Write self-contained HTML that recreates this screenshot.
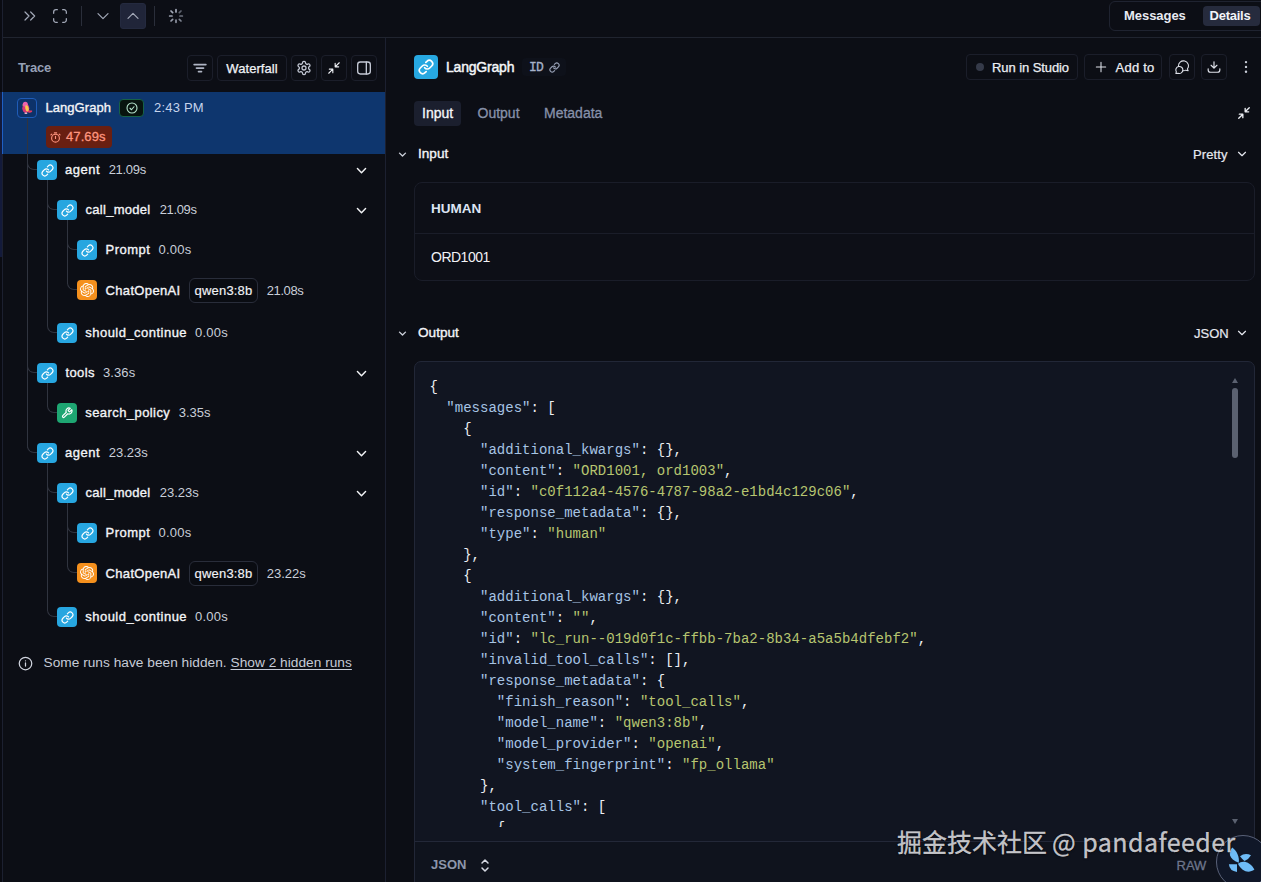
<!DOCTYPE html>
<html lang="en">
<head>
<meta charset="utf-8">
<title>LangGraph trace</title>
<style>
*{box-sizing:border-box;margin:0;padding:0}
html,body{width:1261px;height:882px;overflow:hidden;background:#0c0e15;}
body{position:relative;font-family:"Liberation Sans","Noto Sans CJK SC",sans-serif;font-size:13px;color:#eef0f5;-webkit-font-smoothing:antialiased}
.abs{position:absolute}
svg{display:block}
.ic{stroke:currentColor;fill:none;stroke-linecap:round;stroke-linejoin:round}
/* left strip */
#strip{left:0;top:0;width:2px;height:882px;background:#0a0b12}
#strip .a{left:0;top:92px;width:2px;height:165px;background:#131a3a}
#lborder{left:2px;top:0;width:1px;height:882px;background:#1c2030}
/* top bar */
#topline{left:3px;top:37px;width:1258px;height:1px;background:#20242f}
.tbtn{color:#a3a9b8}
#upbtn{left:120px;top:3px;width:26px;height:26px;border-radius:3px;background:#202539;border:1px solid #242a3f}
.vdiv{width:1px;height:20px;top:6px;background:#2a2e3a}
#seg{left:1109px;top:1px;width:160px;height:30px;border:1px solid #1f2330;border-radius:6px}
#seg .m{left:14px;top:0;height:28px;line-height:28px;font-weight:700;font-size:13px;color:#e8ebf2;letter-spacing:-0.05px}
#seg .d{left:92.5px;text-indent:-2px;top:4px;width:57px;height:20px;border-radius:4px;background:#262b3d;line-height:20px;text-align:center;font-weight:700;font-size:13px;color:#f2f4f8;letter-spacing:-0.25px}
/* left panel */
#pborder{left:385px;top:38px;width:1px;height:844px;background:#1c2030}
#trace{left:18px;top:60px;font-size:13px;font-weight:700;color:#96a0b5;line-height:16px;letter-spacing:-0.2px}
.hbtn{top:55px;width:26px;height:26px;border:1px solid #1b1e2a;border-radius:4px;color:#c3c8d4}
.hbtn svg{position:absolute;left:5px;top:5px}
#wf{left:217px;width:70px;color:#f0f2f6;font-size:13px;line-height:25.4px;text-align:center;letter-spacing:0.05px;-webkit-text-stroke:0.25px #f0f2f6}
#sel{left:2px;top:92px;width:383px;height:62px;background:#0e366e}
#sel .edge{left:0;top:0;width:1px;height:62px;background:#1f5fc4}
#bird{left:15px;top:6px;width:20px;height:20px;border:1px solid #1f5cb8;border-radius:4px;background:#0d3269}
.nm{font-size:13px;line-height:16px;color:#f3f4f7;white-space:nowrap;-webkit-text-stroke:0.35px #f3f4f7}
.du{font-size:13px;line-height:16px;color:#c9ced9;white-space:nowrap}
#okb{left:117px;top:7px;width:25px;height:18px;border:1px solid #176247;border-radius:4px;background:#08140f;color:#b6e3cd}
#okb svg{position:absolute;left:5.5px;top:2px}
#dur{left:43.5px;top:34px;width:66px;height:22px;border-radius:4px;background:#691f11;color:#ff957e;font-size:13px;line-height:22px;-webkit-text-stroke:0.3px #ff957e}
#dur svg{position:absolute;left:4px;top:5.500px}
#dur span{position:absolute;left:20.500px;top:0.300px;letter-spacing:0.100px}
.node{width:20px;height:20px;border-radius:4px;background:#27a6e0;color:#fff}
.node svg{position:absolute;left:3.5px;top:3.5px}
.node.or{background:#f5901d}
.node.gr{background:#1ea672}
.vl{width:1px;background:#30343f}
.cn{width:10px;height:10px;border-left:1px solid #30343f;border-bottom:1px solid #30343f;border-bottom-left-radius:7px}
.chev{left:354.5px;color:#f2f3f6}
.mb{height:25px;width:69px;border:1px solid #292d3a;border-radius:6px;background:#0a0c12;font-size:13px;line-height:23px;text-align:center;color:#f1f2f6;-webkit-text-stroke:0.15px #f1f2f6;letter-spacing:0.2px}
#info{left:43.5px;top:655px;font-size:13.7px;line-height:16px;color:#c6cbd7;white-space:nowrap;letter-spacing:0.02px}
#info u{text-underline-offset:2px}
/* right panel */
#ricon{left:414px;top:55px;width:24px;height:24px;border-radius:4px;background:#27a8e1;color:#fff}
#ricon svg{position:absolute;left:4px;top:4px}
#rtitle{left:446px;top:58px;font-size:14px;line-height:18px;color:#f5f6f9;-webkit-text-stroke:0.45px #f5f6f9;letter-spacing:-0.2px;white-space:nowrap}
#idb{left:522px;top:58px;width:44px;height:18px;border-radius:4px;background:#0e111a}
#idb span{position:absolute;left:7px;top:1.700px;font-family:"Liberation Mono",monospace;font-size:13px;line-height:16px;color:#a6b1c9;letter-spacing:-0.8px;-webkit-text-stroke:0.3px #a6b1c9}
#idb svg{position:absolute;left:26.500px;top:4px;color:#959eb3}
.rbtn{top:54px;height:26px;border:1px solid #1b1e2a;border-radius:4px;color:#dfe2ea}
.rbtn .t{position:absolute;top:0.7px;line-height:24px;font-size:13px;color:#eceef3;white-space:nowrap;-webkit-text-stroke:0.25px #eceef3}
#tab1{left:414px;top:100.5px;width:47px;height:25px;border-radius:4px;background:#1b1f2e}
.tab{top:105.400px;font-size:14px;line-height:17px;white-space:nowrap;-webkit-text-stroke:0.3px currentColor}
.sh{font-size:13.6px;line-height:17px;color:#f3f4f8;-webkit-text-stroke:0.35px #f3f4f8;white-space:nowrap}
.fmt{font-size:13px;line-height:16px;color:#e6e8ef;white-space:nowrap;-webkit-text-stroke:0.2px #e6e8ef}
#hcard{left:414px;top:182px;width:841px;height:99px;border:1px solid #1a1d29;border-radius:8px;background:#0d0f17}
#hcard .ln{left:0;top:49.5px;width:839px;height:1px;background:#1a1d29}
#hcard .h{left:16px;top:18px;font-weight:700;font-size:13.5px;line-height:16px;color:#dce4f3;letter-spacing:0px}
#hcard .v{left:16px;top:66.4px;font-size:14px;line-height:16px;color:#f1f2f6;letter-spacing:-0.5px}
#code{left:414px;top:361px;width:841px;height:540px;border:1px solid #222737;border-radius:7px;background:#111521;overflow:hidden}
#pre{left:14.5px;top:15.1px;font-family:"Liberation Mono","DejaVu Sans Mono",monospace;font-size:14px;letter-spacing:0.015px;line-height:21px;color:#eceef2;white-space:pre;height:449.9px;overflow:hidden}
.k{color:#a7c4e4}.s{color:#b7c570}
#cline{left:0;top:478.5px;width:839px;height:1px;background:#232838}
#cbar{left:0;top:479.5px;width:839px;height:60px;background:#0f131d}
#json{left:16px;top:495px;font-weight:700;font-size:13px;line-height:16px;color:#8d96ab}
#raw{left:761.5px;top:495.5px;font-size:13px;line-height:16px;color:#6d768c;-webkit-text-stroke:0.3px #6d768c}
#thumb{left:817px;top:26px;width:6px;height:70px;border-radius:3px;background:#5b6170}
.tri{width:0;height:0;border-left:3.5px solid transparent;border-right:3.5px solid transparent}
#wm{left:897px;top:822px;font-family:"Noto Sans CJK SC","Liberation Sans",sans-serif;font-size:25px;line-height:38px;color:rgba(212,212,216,0.93);-webkit-text-stroke:0.3px rgba(212,212,216,0.93);white-space:nowrap;text-shadow:0 1px 2px rgba(0,0,0,0.55)}
#jj{left:1216px;top:835px;width:54px;height:54px;border-radius:50%;border:1px solid #596178;background:#101728}
</style>
</head>
<body>
<!-- far-left strip of underlying page -->
<div id="strip" class="abs"><div class="a abs"></div></div>
<div id="lborder" class="abs"></div>

<!-- top bar -->
<div id="topline" class="abs"></div>
<div class="abs tbtn" style="left:22px;top:8px"><svg width="16" height="16" viewBox="0 0 24 24" class="ic" stroke-width="1.800"><path d="M4.500 18l6-6-6-6M13 18l6-6-6-6"/></svg></div>
<div class="abs tbtn" style="left:52px;top:8px"><svg width="16" height="16" viewBox="0 0 24 24" class="ic" stroke-width="1.9"><path d="M8 2.500H6a3.500 3.500 0 0 0-3.500 3.500v2M21.500 8V6A3.500 3.500 0 0 0 18 2.500h-2M2.500 16v2A3.500 3.500 0 0 0 6 21.500h2M16 21.500h2a3.500 3.500 0 0 0 3.500-3.500v-2"/></svg></div>
<div class="abs vdiv" style="left:81px"></div>
<div class="abs tbtn" style="left:95px;top:8px"><svg width="16" height="16" viewBox="0 0 24 24" class="ic" stroke-width="1.800"><path d="M4.500 8.500l7.500 7.500 7.500-7.500"/></svg></div>
<div id="upbtn" class="abs tbtn"><svg style="position:absolute;left:4px;top:4px" width="16" height="16" viewBox="0 0 24 24" class="ic" stroke-width="1.800"><path d="M19.500 15.500l-7.500-7.500-7.500 7.500"/></svg></div>
<div class="abs vdiv" style="left:154px"></div>
<div class="abs tbtn" style="left:168px;top:8px"><svg width="16" height="16" viewBox="0 0 24 24" class="ic" stroke-width="2.600"><path d="M12 2.500v3.500" opacity="1"/><path d="M17 7l2.500-2.500" opacity=".55"/><path d="M18 12h3.500" opacity=".65"/><path d="M17 17l2.500 2.500" opacity=".75"/><path d="M12 18v3.500" opacity=".85"/><path d="M4.500 19.500L7 17" opacity=".9"/><path d="M2.500 12H6" opacity=".95"/><path d="M4.500 4.500L7 7" opacity="1"/></svg></div>
<div id="seg" class="abs"><div class="m abs">Messages</div><div class="d abs">Details</div></div>

<!-- left panel header -->
<div id="pborder" class="abs"></div>
<div id="trace" class="abs">Trace</div>
<div class="abs hbtn" style="left:187px;color:#aeb4c3"><svg width="14" height="14" viewBox="0 0 24 24" class="ic" stroke-width="3" stroke-linecap="butt"><path d="M2 6h20M6 12h12M9.500 18h5"/></svg></div>
<div id="wf" class="abs hbtn">Waterfall</div>
<div class="abs hbtn" style="left:291px"><svg style="left:4px;top:4px" width="16" height="16" viewBox="0 0 24 24" class="ic" stroke-width="1.9"><path d="M12.22 2h-.44a2 2 0 0 0-2 2v.18a2 2 0 0 1-1 1.73l-.43.25a2 2 0 0 1-2 0l-.15-.08a2 2 0 0 0-2.73.73l-.22.38a2 2 0 0 0 .73 2.73l.15.1a2 2 0 0 1 1 1.72v.51a2 2 0 0 1-1 1.74l-.15.09a2 2 0 0 0-.73 2.73l.22.38a2 2 0 0 0 2.73.73l.15-.08a2 2 0 0 1 2 0l.43.25a2 2 0 0 1 1 1.73V20a2 2 0 0 0 2 2h.44a2 2 0 0 0 2-2v-.18a2 2 0 0 1 1-1.73l.43-.25a2 2 0 0 1 2 0l.15.08a2 2 0 0 0 2.73-.73l.22-.39a2 2 0 0 0-.73-2.73l-.15-.08a2 2 0 0 1-1-1.74v-.5a2 2 0 0 1 1-1.74l.15-.09a2 2 0 0 0 .73-2.73l-.22-.38a2 2 0 0 0-2.73-.73l-.15.08a2 2 0 0 1-2 0l-.43-.25a2 2 0 0 1-1-1.73V4a2 2 0 0 0-2-2z"/><circle cx="12" cy="12" r="3"/></svg></div>
<div class="abs hbtn" style="left:321px;color:#eef0f5"><svg width="14" height="14" viewBox="0 0 24 24" class="ic" stroke-width="1.9"><path d="M4 14h6v6M20 10h-6V4M14 10l7-7M3 21l7-7"/></svg></div>
<div class="abs hbtn" style="left:351px"><svg style="left:4px;top:4px" width="16" height="16" viewBox="0 0 24 24" class="ic" stroke-width="2"><rect x="2.500" y="3" width="19" height="18" rx="4"/><path d="M15.500 3v18"/></svg></div>

<!-- selected root row -->
<div id="sel" class="abs">
  <div class="edge abs"></div>
  <div id="bird" class="abs"><svg style="position:absolute;left:-1px;top:-1px" width="20" height="20" viewBox="0 0 20 20"><path d="M10.800 11.200c1.200 1.300 2.800 1.500 4.300 1.300.4.900-.2 1.900-1.400 2.100-1.400.2-2.700-.3-3.600-1.200z" fill="#e23a62"/><ellipse cx="8.800" cy="10.300" rx="3.500" ry="4.700" fill="#d93877"/><circle cx="8.300" cy="6.300" r="2.500" fill="#ee62ad"/><path d="M5.800 6.600l-1 .7 1.200.3z" fill="#f5b942"/><ellipse cx="10" cy="10.400" rx="1.700" ry="3.100" transform="rotate(-12 10 10.400)" fill="#f8c74d"/><path d="M7.600 14.600h2.600v1.300H7.600z" fill="#f7c3d6"/></svg></div>
  <div class="nm abs" style="left:43.5px;top:7.5px;letter-spacing:0.05px">LangGraph</div>
  <div id="okb" class="abs"><svg width="12" height="12" viewBox="0 0 24 24" class="ic" stroke-width="2.2"><circle cx="12" cy="12" r="10"/><path d="M8 12.500l3 3 5-6"/></svg></div>
  <div class="du abs" style="left:152px;top:7.5px;color:#c6d4ec;letter-spacing:0.2px">2:43 PM</div>
  <div id="dur" class="abs"><svg width="11" height="11" viewBox="0 0 24 24" class="ic" stroke-width="2.4"><circle cx="12" cy="13.500" r="8.500"/><path d="M12 9.500v4.500M9.500 2h5M4 4.500l-2 2M20 4.500l2 2"/></svg><span>47.69s</span></div>
</div>

<!-- tree lines -->
<div id="tree">
<div class="abs vl" style="left:27px;top:118px;height:330px"></div>
<div class="abs vl" style="left:47px;top:180px;height:146px"></div>
<div class="abs vl" style="left:67px;top:220px;height:64px"></div>
<div class="abs vl" style="left:47px;top:383px;height:24px"></div>
<div class="abs vl" style="left:47px;top:463px;height:148px"></div>
<div class="abs vl" style="left:67px;top:503px;height:64px"></div>
</div>

<!-- ROWS -->
<div class="abs cn" style="left:27px;top:159.5px"></div>
<div class="abs node" style="left:37px;top:160px"><svg width="13" height="13" viewBox="0 0 24 24" class="ic" stroke-width="2.200"><path d="M10 13a5 5 0 0 0 7.540.54l3-3a5 5 0 0 0-7.070-7.070l-1.720 1.710"/><path d="M14 11a5 5 0 0 0-7.540-.54l-3 3a5 5 0 0 0 7.070 7.070l1.710-1.710"/></svg></div>
<div class="abs nm" style="left:65px;top:162px;letter-spacing:0.5px">agent</div>
<div class="abs du" style="left:108.7px;top:162px;letter-spacing:-0.3px">21.09s</div>
<div class="abs chev" style="top:163.5px"><svg width="13" height="13" viewBox="0 0 24 24" class="ic" stroke-width="2.700"><path d="M4.500 8.500l7.500 7.500 7.500-7.500"/></svg></div>
<div class="abs cn" style="left:47px;top:199.5px"></div>
<div class="abs node" style="left:57px;top:200px"><svg width="13" height="13" viewBox="0 0 24 24" class="ic" stroke-width="2.200"><path d="M10 13a5 5 0 0 0 7.540.54l3-3a5 5 0 0 0-7.070-7.070l-1.720 1.710"/><path d="M14 11a5 5 0 0 0-7.540-.54l-3 3a5 5 0 0 0 7.070 7.070l1.710-1.710"/></svg></div>
<div class="abs nm" style="left:85.5px;top:202px;letter-spacing:0.28px">call_model</div>
<div class="abs du" style="left:159.7px;top:202px;letter-spacing:-0.35px">21.09s</div>
<div class="abs chev" style="top:203.5px"><svg width="13" height="13" viewBox="0 0 24 24" class="ic" stroke-width="2.700"><path d="M4.500 8.500l7.500 7.500 7.500-7.500"/></svg></div>
<div class="abs cn" style="left:67px;top:239.5px"></div>
<div class="abs node" style="left:77px;top:240px"><svg width="13" height="13" viewBox="0 0 24 24" class="ic" stroke-width="2.200"><path d="M10 13a5 5 0 0 0 7.540.54l3-3a5 5 0 0 0-7.070-7.070l-1.720 1.710"/><path d="M14 11a5 5 0 0 0-7.540-.54l-3 3a5 5 0 0 0 7.070 7.070l1.710-1.710"/></svg></div>
<div class="abs nm" style="left:105.6px;top:242px;letter-spacing:0.48px">Prompt</div>
<div class="abs du" style="left:158.5px;top:242px;letter-spacing:0.25px">0.00s</div>
<div class="abs cn" style="left:67px;top:279.5px"></div>
<div class="abs node or" style="left:77px;top:280px"><svg width="14" height="14" viewBox="0 0 24 24" style="left:3px;top:3px"><path fill="#fff" d="M22.2819 9.8211a5.9847 5.9847 0 0 0-.5157-4.9108 6.0462 6.0462 0 0 0-6.5098-2.9A6.0651 6.0651 0 0 0 4.9807 4.1818a5.9847 5.9847 0 0 0-3.9977 2.9 6.0462 6.0462 0 0 0 .7427 7.0966 5.98 5.98 0 0 0 .511 4.9107 6.051 6.051 0 0 0 6.5146 2.9001A5.9847 5.9847 0 0 0 13.2599 24a6.0557 6.0557 0 0 0 5.7718-4.2058 5.9894 5.9894 0 0 0 3.9977-2.9001 6.0557 6.0557 0 0 0-.7475-7.0729zm-9.022 12.6081a4.4755 4.4755 0 0 1-2.8764-1.0408l.1419-.0804 4.7783-2.7582a.7948.7948 0 0 0 .3927-.6813v-6.7369l2.02 1.1686a.071.071 0 0 1 .038.052v5.5826a4.504 4.504 0 0 1-4.4945 4.4944zm-9.6607-4.1254a4.4708 4.4708 0 0 1-.5346-3.0137l.142.0852 4.783 2.7582a.7712.7712 0 0 0 .7806 0l5.8428-3.3685v2.3324a.0804.0804 0 0 1-.0332.0615L9.74 19.9502a4.4992 4.4992 0 0 1-6.1408-1.6464zM2.3408 7.8956a4.485 4.485 0 0 1 2.3655-1.9728V11.6a.7664.7664 0 0 0 .3879.6765l5.8144 3.3543-2.0201 1.1685a.0757.0757 0 0 1-.071 0l-4.8303-2.7865A4.504 4.504 0 0 1 2.3408 7.872zm16.5963 3.8558L13.1038 8.364 15.1192 7.2a.0757.0757 0 0 1 .071 0l4.8303 2.7913a4.4944 4.4944 0 0 1-.6765 8.1042v-5.6772a.79.79 0 0 0-.407-.667zm2.0107-3.0231l-.142-.0852-4.7735-2.7818a.7759.7759 0 0 0-.7854 0L9.409 9.2297V6.8974a.0662.0662 0 0 1 .0284-.0615l4.8303-2.7866a4.4992 4.4992 0 0 1 6.6802 4.66zM8.3065 12.863l-2.02-1.1638a.0804.0804 0 0 1-.038-.0567V6.0742a4.4992 4.4992 0 0 1 7.3757-3.4537l-.142.0805L8.704 5.459a.7948.7948 0 0 0-.3927.6813zm1.0976-2.3654l2.602-1.4998 2.6069 1.4998v2.9994l-2.5974 1.4997-2.6067-1.4997Z"/></svg></div>
<div class="abs nm" style="left:105.6px;top:283.3px;letter-spacing:0.33px">ChatOpenAI</div>
<div class="abs mb" style="left:189px;top:278px">qwen3:8b</div>
<div class="abs du" style="left:266.7px;top:283.3px;letter-spacing:-0.38px">21.08s</div>
<div class="abs cn" style="left:47px;top:322.5px"></div>
<div class="abs node" style="left:57px;top:323px"><svg width="13" height="13" viewBox="0 0 24 24" class="ic" stroke-width="2.200"><path d="M10 13a5 5 0 0 0 7.540.54l3-3a5 5 0 0 0-7.070-7.070l-1.720 1.710"/><path d="M14 11a5 5 0 0 0-7.540-.54l-3 3a5 5 0 0 0 7.070 7.070l1.710-1.710"/></svg></div>
<div class="abs nm" style="left:85.3px;top:325px;letter-spacing:0.47px">should_continue</div>
<div class="abs du" style="left:195px;top:325px;letter-spacing:0.25px">0.00s</div>
<div class="abs cn" style="left:27px;top:362.5px"></div>
<div class="abs node" style="left:37px;top:363px"><svg width="13" height="13" viewBox="0 0 24 24" class="ic" stroke-width="2.200"><path d="M10 13a5 5 0 0 0 7.540.54l3-3a5 5 0 0 0-7.070-7.070l-1.720 1.710"/><path d="M14 11a5 5 0 0 0-7.540-.54l-3 3a5 5 0 0 0 7.070 7.070l1.710-1.710"/></svg></div>
<div class="abs nm" style="left:65.4px;top:365px;letter-spacing:0.4px">tools</div>
<div class="abs du" style="left:103px;top:365px;letter-spacing:0.1px">3.36s</div>
<div class="abs chev" style="top:366.5px"><svg width="13" height="13" viewBox="0 0 24 24" class="ic" stroke-width="2.700"><path d="M4.500 8.500l7.500 7.500 7.500-7.500"/></svg></div>
<div class="abs cn" style="left:47px;top:402.5px"></div>
<div class="abs node gr" style="left:57px;top:403px"><svg width="12" height="12" viewBox="0 0 24 24" class="ic" stroke-width="2.400"><path d="M14.700 6.300a1 1 0 0 0 0 1.400l1.600 1.600a1 1 0 0 0 1.400 0l3.770-3.770a6 6 0 0 1-7.940 7.940l-6.910 6.910a2.120 2.120 0 0 1-3-3l6.910-6.910a6 6 0 0 1 7.940-7.940l-3.760 3.760z"/></svg></div>
<div class="abs nm" style="left:85.3px;top:405px;letter-spacing:0.42px">search_policy</div>
<div class="abs du" style="left:178.7px;top:405px;letter-spacing:0px">3.35s</div>
<div class="abs cn" style="left:27px;top:442.5px"></div>
<div class="abs node" style="left:37px;top:443px"><svg width="13" height="13" viewBox="0 0 24 24" class="ic" stroke-width="2.200"><path d="M10 13a5 5 0 0 0 7.540.54l3-3a5 5 0 0 0-7.070-7.070l-1.720 1.710"/><path d="M14 11a5 5 0 0 0-7.540-.54l-3 3a5 5 0 0 0 7.070 7.070l1.710-1.710"/></svg></div>
<div class="abs nm" style="left:65px;top:445px;letter-spacing:0.5px">agent</div>
<div class="abs du" style="left:108.7px;top:445px;letter-spacing:0px">23.23s</div>
<div class="abs chev" style="top:446.5px"><svg width="13" height="13" viewBox="0 0 24 24" class="ic" stroke-width="2.700"><path d="M4.500 8.500l7.500 7.500 7.500-7.500"/></svg></div>
<div class="abs cn" style="left:47px;top:482.5px"></div>
<div class="abs node" style="left:57px;top:483px"><svg width="13" height="13" viewBox="0 0 24 24" class="ic" stroke-width="2.200"><path d="M10 13a5 5 0 0 0 7.540.54l3-3a5 5 0 0 0-7.070-7.070l-1.720 1.710"/><path d="M14 11a5 5 0 0 0-7.540-.54l-3 3a5 5 0 0 0 7.070 7.070l1.710-1.710"/></svg></div>
<div class="abs nm" style="left:85.5px;top:485px;letter-spacing:0.28px">call_model</div>
<div class="abs du" style="left:159.7px;top:485px;letter-spacing:0px">23.23s</div>
<div class="abs chev" style="top:486.5px"><svg width="13" height="13" viewBox="0 0 24 24" class="ic" stroke-width="2.700"><path d="M4.500 8.500l7.500 7.500 7.500-7.500"/></svg></div>
<div class="abs cn" style="left:67px;top:522.5px"></div>
<div class="abs node" style="left:77px;top:523px"><svg width="13" height="13" viewBox="0 0 24 24" class="ic" stroke-width="2.200"><path d="M10 13a5 5 0 0 0 7.540.54l3-3a5 5 0 0 0-7.070-7.070l-1.720 1.710"/><path d="M14 11a5 5 0 0 0-7.540-.54l-3 3a5 5 0 0 0 7.070 7.070l1.710-1.710"/></svg></div>
<div class="abs nm" style="left:105.6px;top:525px;letter-spacing:0.48px">Prompt</div>
<div class="abs du" style="left:158.5px;top:525px;letter-spacing:0.25px">0.00s</div>
<div class="abs cn" style="left:67px;top:562.5px"></div>
<div class="abs node or" style="left:77px;top:563px"><svg width="14" height="14" viewBox="0 0 24 24" style="left:3px;top:3px"><path fill="#fff" d="M22.2819 9.8211a5.9847 5.9847 0 0 0-.5157-4.9108 6.0462 6.0462 0 0 0-6.5098-2.9A6.0651 6.0651 0 0 0 4.9807 4.1818a5.9847 5.9847 0 0 0-3.9977 2.9 6.0462 6.0462 0 0 0 .7427 7.0966 5.98 5.98 0 0 0 .511 4.9107 6.051 6.051 0 0 0 6.5146 2.9001A5.9847 5.9847 0 0 0 13.2599 24a6.0557 6.0557 0 0 0 5.7718-4.2058 5.9894 5.9894 0 0 0 3.9977-2.9001 6.0557 6.0557 0 0 0-.7475-7.0729zm-9.022 12.6081a4.4755 4.4755 0 0 1-2.8764-1.0408l.1419-.0804 4.7783-2.7582a.7948.7948 0 0 0 .3927-.6813v-6.7369l2.02 1.1686a.071.071 0 0 1 .038.052v5.5826a4.504 4.504 0 0 1-4.4945 4.4944zm-9.6607-4.1254a4.4708 4.4708 0 0 1-.5346-3.0137l.142.0852 4.783 2.7582a.7712.7712 0 0 0 .7806 0l5.8428-3.3685v2.3324a.0804.0804 0 0 1-.0332.0615L9.74 19.9502a4.4992 4.4992 0 0 1-6.1408-1.6464zM2.3408 7.8956a4.485 4.485 0 0 1 2.3655-1.9728V11.6a.7664.7664 0 0 0 .3879.6765l5.8144 3.3543-2.0201 1.1685a.0757.0757 0 0 1-.071 0l-4.8303-2.7865A4.504 4.504 0 0 1 2.3408 7.872zm16.5963 3.8558L13.1038 8.364 15.1192 7.2a.0757.0757 0 0 1 .071 0l4.8303 2.7913a4.4944 4.4944 0 0 1-.6765 8.1042v-5.6772a.79.79 0 0 0-.407-.667zm2.0107-3.0231l-.142-.0852-4.7735-2.7818a.7759.7759 0 0 0-.7854 0L9.409 9.2297V6.8974a.0662.0662 0 0 1 .0284-.0615l4.8303-2.7866a4.4992 4.4992 0 0 1 6.6802 4.66zM8.3065 12.863l-2.02-1.1638a.0804.0804 0 0 1-.038-.0567V6.0742a4.4992 4.4992 0 0 1 7.3757-3.4537l-.142.0805L8.704 5.459a.7948.7948 0 0 0-.3927.6813zm1.0976-2.3654l2.602-1.4998 2.6069 1.4998v2.9994l-2.5974 1.4997-2.6067-1.4997Z"/></svg></div>
<div class="abs nm" style="left:105.6px;top:566.3px;letter-spacing:0.33px">ChatOpenAI</div>
<div class="abs mb" style="left:189px;top:561px">qwen3:8b</div>
<div class="abs du" style="left:266.7px;top:566.3px;letter-spacing:0px">23.22s</div>
<div class="abs cn" style="left:47px;top:606.5px"></div>
<div class="abs node" style="left:57px;top:607px"><svg width="13" height="13" viewBox="0 0 24 24" class="ic" stroke-width="2.200"><path d="M10 13a5 5 0 0 0 7.540.54l3-3a5 5 0 0 0-7.070-7.070l-1.720 1.710"/><path d="M14 11a5 5 0 0 0-7.540-.54l-3 3a5 5 0 0 0 7.070 7.070l1.710-1.710"/></svg></div>
<div class="abs nm" style="left:85.3px;top:609px;letter-spacing:0.47px">should_continue</div>
<div class="abs du" style="left:195px;top:609px;letter-spacing:0.25px">0.00s</div>
<div class="abs" style="left:17.500px;top:655.500px;color:#d0d4de"><svg width="15" height="15" viewBox="0 0 24 24" class="ic" stroke-width="2"><circle cx="12" cy="12" r="10"/><path d="M12 16v-5M12 7.600v.1"/></svg></div>
<div id="info" class="abs">Some runs have been hidden. <u>Show 2 hidden runs</u></div>
<!-- /ROWS -->

<!-- right header -->
<div id="ricon" class="abs"><svg width="16" height="16" viewBox="0 0 24 24" class="ic" stroke-width="2.500"><path d="M10 13a5 5 0 0 0 7.540.54l3-3a5 5 0 0 0-7.070-7.070l-1.720 1.710"/><path d="M14 11a5 5 0 0 0-7.540-.54l-3 3a5 5 0 0 0 7.070 7.070l1.710-1.710"/></svg></div>
<div id="rtitle" class="abs">LangGraph</div>
<div id="idb" class="abs"><span>ID</span><svg width="11" height="11" viewBox="0 0 24 24" class="ic" stroke-width="2.600"><path d="M10 13a5 5 0 0 0 7.540.54l3-3a5 5 0 0 0-7.070-7.070l-1.720 1.710"/><path d="M14 11a5 5 0 0 0-7.540-.54l-3 3a5 5 0 0 0 7.070 7.070l1.710-1.710"/></svg></div>

<div class="abs rbtn" style="left:966px;width:112px"><div class="abs" style="left:9px;top:8px;width:8px;height:8px;border-radius:50%;background:#353a49"></div><div class="t" style="left:25px;letter-spacing:-0.080px">Run in Studio</div></div>
<div class="abs rbtn" style="left:1084px;width:78px"><svg style="position:absolute;left:9px;top:4.500px" width="14" height="14" viewBox="0 0 24 24" class="ic" stroke-width="1.800"><path d="M12 4v16M4 12h16"/></svg><div class="t" style="left:30.500px;letter-spacing:0.250px">Add to</div></div>
<div class="abs rbtn" style="left:1169px;width:26px"><svg style="position:absolute;left:5px;top:4.500px" width="14" height="14" viewBox="0 0 24 24" class="ic" stroke-width="1.800"><path d="M6.080 11.180A8.500 8.500 0 1 1 21.300 15.100L22.500 18.500L18.600 17.400A8.500 8.500 0 0 1 13.400 18.430"/><path d="M2.300 20A6 6 0 1 1 5.450 22.640L1.500 23.300Z"/></svg></div>
<div class="abs rbtn" style="left:1201px;width:26px"><svg style="position:absolute;left:5px;top:4.500px" width="14" height="14" viewBox="0 0 24 24" class="ic" stroke-width="2"><path d="M12 3v11M7 9l5 5 5-5"/><path d="M2 15v2a4 4 0 0 0 4 4h12a4 4 0 0 0 4-4v-2"/></svg></div>
<div class="abs" style="left:1239px;top:59px;color:#c9cdd8"><svg width="14" height="16" viewBox="0 0 14 16"><circle cx="7" cy="3.100" r="1.200" fill="currentColor"/><circle cx="7" cy="7.900" r="1.200" fill="currentColor"/><circle cx="7" cy="12.700" r="1.200" fill="currentColor"/></svg></div>

<!-- tabs -->
<div id="tab1" class="abs"></div>
<div class="abs tab" style="left:422px;color:#f6f7fa">Input</div>
<div class="abs tab" style="left:477.500px;color:#8791a9">Output</div>
<div class="abs tab" style="left:544px;color:#8791a9">Metadata</div>
<div class="abs" style="left:1237px;top:106px;color:#eceef3"><svg width="14" height="14" viewBox="0 0 24 24" class="ic" stroke-width="2.300"><path d="M4 14h6v6M20 10h-6V4M14 10l7-7M3 21l7-7"/></svg></div>

<!-- Input section -->
<div class="abs" style="left:396.500px;top:148.500px;color:#ccd0da"><svg width="11" height="11" viewBox="0 0 24 24" class="ic" stroke-width="3"><path d="M5.500 9l6.500 6.500 6.500-6.500"/></svg></div>
<div class="abs sh" style="left:418px;top:145px">Input</div>
<div class="abs fmt" style="left:1193px;top:147px;letter-spacing:0.1px">Pretty</div>
<div class="abs" style="left:1235px;top:147px;color:#e6e8ef"><svg width="14" height="14" viewBox="0 0 24 24" class="ic" stroke-width="2"><path d="M6 9l6 6 6-6"/></svg></div>
<div id="hcard" class="abs"><div class="ln abs"></div><div class="h abs">HUMAN</div><div class="v abs">ORD1001</div></div>

<!-- Output section -->
<div class="abs" style="left:396.500px;top:327.500px;color:#ccd0da"><svg width="11" height="11" viewBox="0 0 24 24" class="ic" stroke-width="3"><path d="M5.500 9l6.500 6.500 6.500-6.500"/></svg></div>
<div class="abs sh" style="left:418px;top:324px">Output</div>
<div class="abs fmt" style="left:1194px;top:325.800px">JSON</div>
<div class="abs" style="left:1235px;top:326px;color:#e6e8ef"><svg width="14" height="14" viewBox="0 0 24 24" class="ic" stroke-width="2"><path d="M6 9l6 6 6-6"/></svg></div>

<div id="code" class="abs">
<div id="pre" class="abs">{
  <span class="k">"messages"</span>: [
    {
      <span class="k">"additional_kwargs"</span>: {},
      <span class="k">"content"</span>: <span class="s">"ORD1001, ord1003"</span>,
      <span class="k">"id"</span>: <span class="s">"c0f112a4-4576-4787-98a2-e1bd4c129c06"</span>,
      <span class="k">"response_metadata"</span>: {},
      <span class="k">"type"</span>: <span class="s">"human"</span>
    },
    {
      <span class="k">"additional_kwargs"</span>: {},
      <span class="k">"content"</span>: <span class="s">""</span>,
      <span class="k">"id"</span>: <span class="s">"lc_run--019d0f1c-ffbb-7ba2-8b34-a5a5b4dfebf2"</span>,
      <span class="k">"invalid_tool_calls"</span>: [],
      <span class="k">"response_metadata"</span>: {
        <span class="k">"finish_reason"</span>: <span class="s">"tool_calls"</span>,
        <span class="k">"model_name"</span>: <span class="s">"qwen3:8b"</span>,
        <span class="k">"model_provider"</span>: <span class="s">"openai"</span>,
        <span class="k">"system_fingerprint"</span>: <span class="s">"fp_ollama"</span>
      },
      <span class="k">"tool_calls"</span>: [
        {
          <span class="k">"args"</span>: {</div>
<div class="abs tri" style="left:816.500px;top:16px;border-bottom:5px solid #5b6170"></div>
<div id="thumb" class="abs"></div>
<div class="abs tri" style="left:816.500px;top:457px;border-top:5px solid #5b6170"></div>
<div id="cline" class="abs"></div>
<div id="cbar" class="abs"></div>
<div id="json" class="abs">JSON</div>
<div class="abs" style="left:64px;top:496px;color:#d5d9e2"><svg width="12" height="15" viewBox="0 0 12 15" class="ic" stroke-width="1.500"><path d="M3 5l3-3 3 3M3 10l3 3 3-3"/></svg></div>
<div id="raw" class="abs">RAW</div>
</div>

<!-- watermark -->
<div id="jj" class="abs"><svg style="position:absolute;left:-1px;top:-1px" width="54" height="54" viewBox="0 0 54 54"><g fill="#6fbcf7"><path d="M16.300 12.500C12 17 12.500 24 22.800 27.800C23.500 22 21 16 16.300 12.500Z"/><path d="M24 21.300Q29 17.500 35 20.300Q33 24 28.500 26.100Q26 24 24 21.300Z"/><path d="M22 28.800C26 25 34 26 38.400 34.600C33 38.500 26 37 22 28.800Z"/><path d="M12.900 29.300L21 29.300L21 37Q13.500 36 12.900 29.300Z"/></g></svg></div>
<div id="wm" class="abs">掘金技术社区<span style="letter-spacing:0.450px;margin-left:-1px"> @ pandafeeder</span></div>
</body>
</html>
